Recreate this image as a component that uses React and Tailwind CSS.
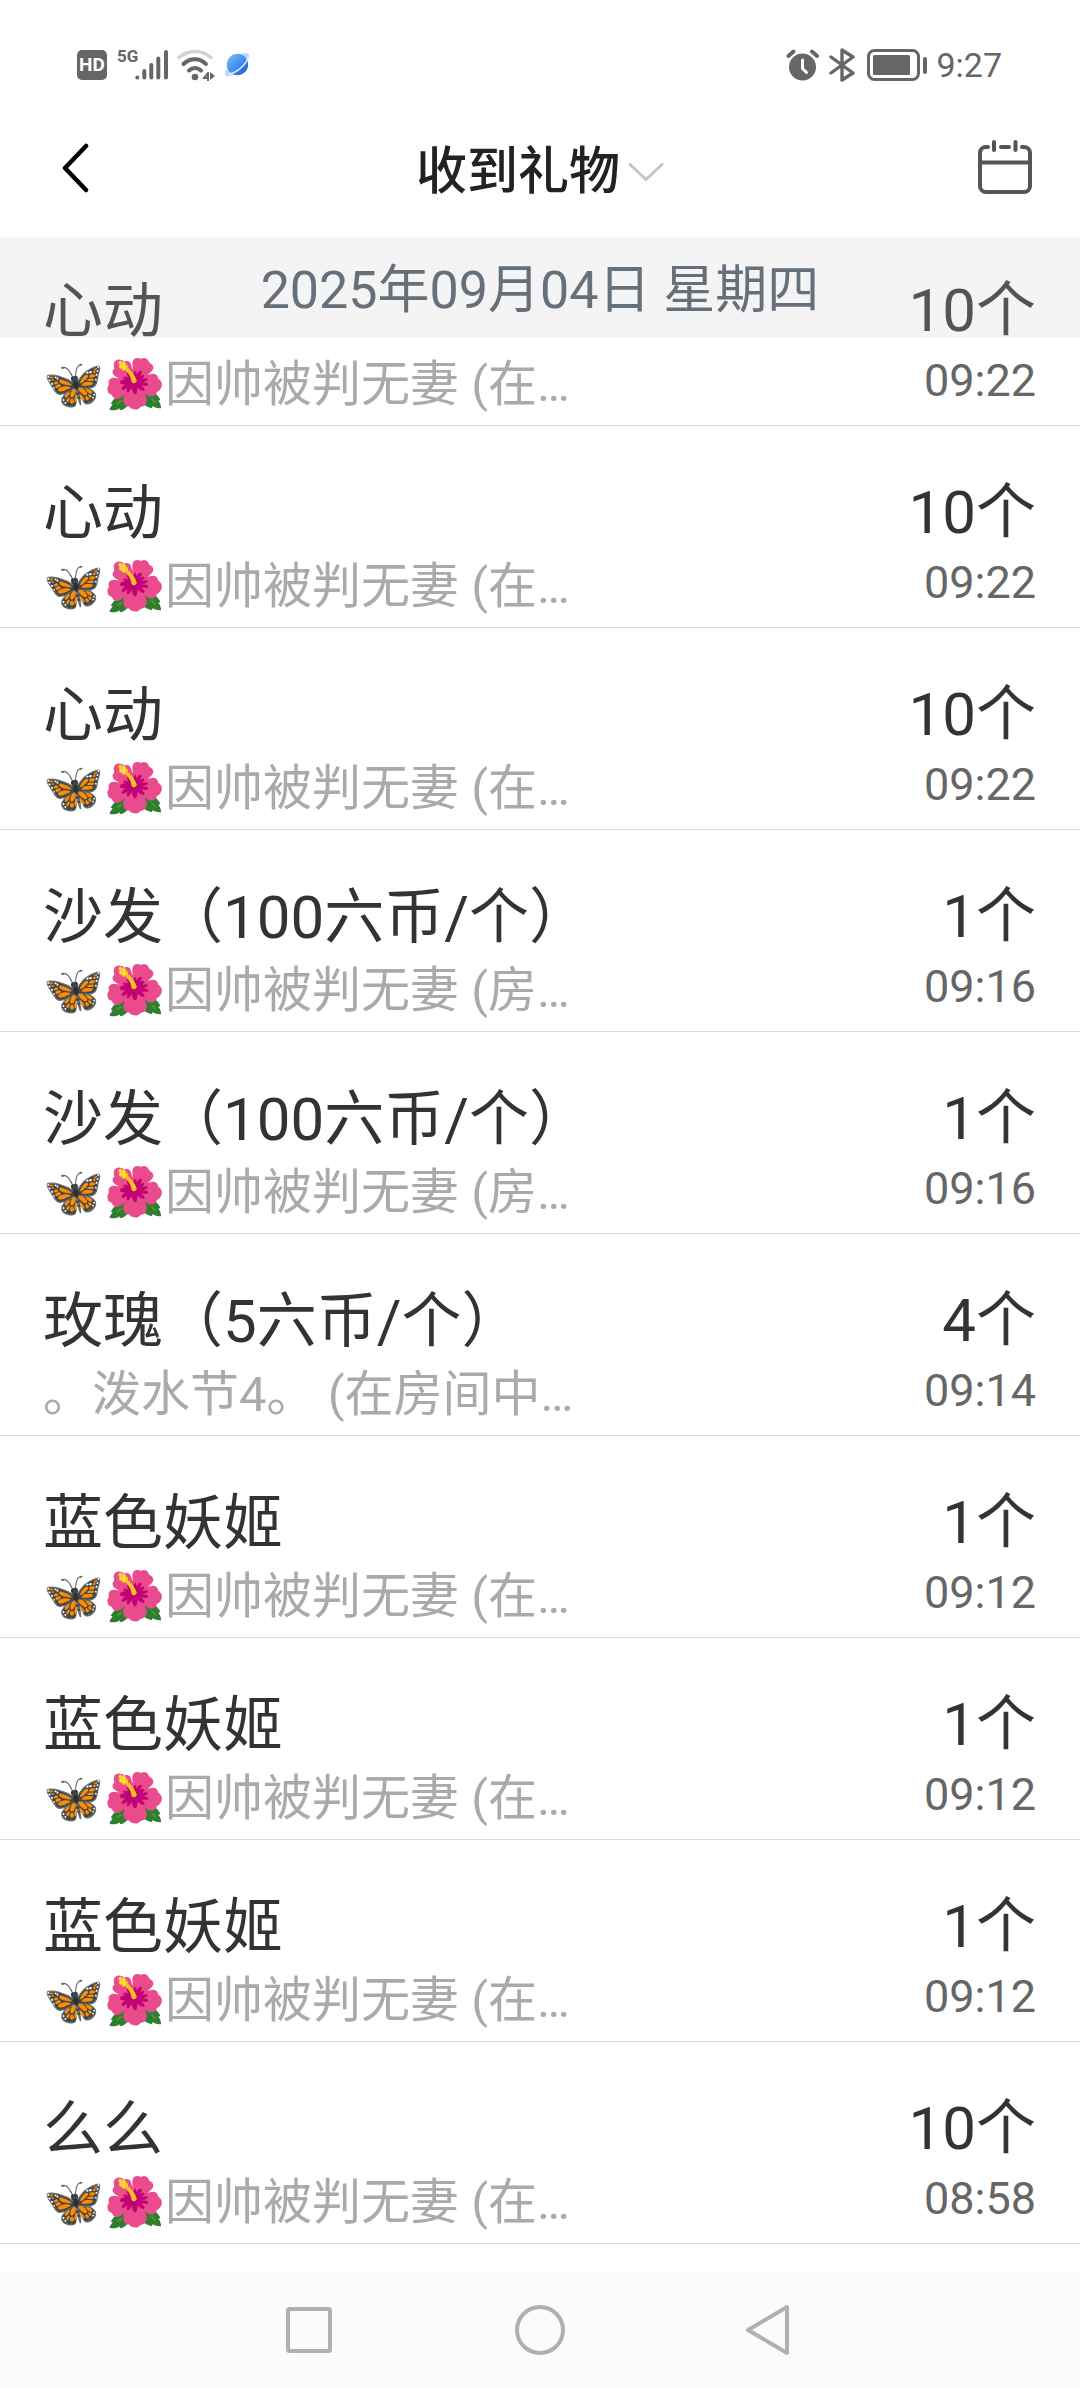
const GIFTS = [
  { name: '心动', from: '🦋🌺因帅被判无妻 (在…', count: '10个', time: '09:22' },
  { name: '心动', from: '🦋🌺因帅被判无妻 (在…', count: '10个', time: '09:22' },
  { name: '心动', from: '🦋🌺因帅被判无妻 (在…', count: '10个', time: '09:22' },
  { name: '沙发（100六币/个）', from: '🦋🌺因帅被判无妻 (房…', count: '1个', time: '09:16' },
  { name: '沙发（100六币/个）', from: '🦋🌺因帅被判无妻 (房…', count: '1个', time: '09:16' },
  { name: '玫瑰（5六币/个）', from: '。泼水节4。 (在房间中…', count: '4个', time: '09:14' },
  { name: '蓝色妖姬', from: '🦋🌺因帅被判无妻 (在…', count: '1个', time: '09:12' },
  { name: '蓝色妖姬', from: '🦋🌺因帅被判无妻 (在…', count: '1个', time: '09:12' },
  { name: '蓝色妖姬', from: '🦋🌺因帅被判无妻 (在…', count: '1个', time: '09:12' },
  { name: '么么', from: '🦋🌺因帅被判无妻 (在…', count: '10个', time: '08:58' },
]

function SignalIcon() {
  return (
    <svg width="34" height="32" viewBox="0 0 34 32" stroke="#666" strokeWidth="4" strokeLinecap="round">
      <path d="M2.3 28.5v.1M9.3 22v6.6M16.3 16v12.6M23.3 9.5v19.1M31 3v25.6" />
    </svg>
  )
}

function WifiIcon() {
  return (
    <svg width="38" height="32" viewBox="0 0 38 32" fill="none" strokeLinecap="round">
      <path d="M2 8.5C11 .5 25 .5 34 8.5" stroke="#d2d2d2" strokeWidth="3.4" />
      <path d="M6.5 15C13 8.5 23 8.5 29 15" stroke="#666" strokeWidth="4" />
      <path d="M12 21.5C15.5 18 20.5 18 24 21.5" stroke="#666" strokeWidth="4" />
      <circle cx="18" cy="28" r="3.3" fill="#666" />
      <path d="M31 24v8M31 24l-4 5h4" stroke="#666" strokeWidth="2" />
      <path d="M33 23v8l5-4z" fill="#666" />
    </svg>
  )
}

function PlanetIcon() {
  return (
    <svg width="26" height="28" viewBox="0 0 28 28">
      <defs>
        <linearGradient id="planet" x1="0" y1="0" x2="1" y2="1">
          <stop offset="0" stopColor="#7cc4f8" />
          <stop offset=".6" stopColor="#3a85ea" />
          <stop offset="1" stopColor="#1c50cc" />
        </linearGradient>
      </defs>
      <path d="M19 2c5-2 8-1 8 2 0 7-13 21-22 22-4 1-5-2-3-6z" fill="#bcd6fa" />
      <circle cx="14.5" cy="13.5" r="11.5" fill="url(#planet)" />
      <path d="M26 6c-2 7-11 16-21 18" fill="none" stroke="#d9e9ff" strokeWidth="1.6" />
    </svg>
  )
}

function AlarmIcon() {
  return (
    <svg width="34" height="32" viewBox="0 0 34 32" fill="none" strokeLinecap="round" strokeLinejoin="round">
      <circle cx="16.5" cy="18" r="13.5" fill="#666" />
      <path d="M2.5 7l5-4.5M31 7l-5-4.5" stroke="#666" strokeWidth="4" />
      <path d="M16.5 11v8.5l4 4" stroke="#fff" strokeWidth="3" />
    </svg>
  )
}

function BluetoothIcon() {
  return (
    <svg width="26" height="34" viewBox="0 0 26 34" fill="none" stroke="#666" strokeWidth="3.4" strokeLinecap="round" strokeLinejoin="round">
      <path d="M2 9l22 16-11 7V2l11 7L2 25" />
    </svg>
  )
}

function BatteryIcon() {
  return (
    <svg width="61" height="32" viewBox="0 0 61 32">
      <rect x="1.5" y="1.5" width="50" height="29" rx="6" fill="none" stroke="#666" strokeWidth="3" />
      <rect x="6" y="6" width="37" height="20" rx="1.5" fill="#666" />
      <rect x="56" y="8" width="4" height="17" rx="2" fill="#666" />
    </svg>
  )
}

function StatusBar() {
  return (
    <div className="flex h-[130px] items-center justify-between pr-[78px] pl-[77px] text-[#666]">
      <div className="flex items-center">
        <span className="flex size-[30px] items-center justify-center rounded-[5px] bg-[#666] text-[19px] font-bold text-white">HD</span>
        <span className="-mr-[3px] mb-[18px] ml-[10px] text-[17px] leading-[18px] font-bold">5G</span>
        <SignalIcon />
        <span className="ml-[8px]"><WifiIcon /></span>
        <span className="ml-[9px]"><PlanetIcon /></span>
      </div>
      <div className="flex items-center">
        <AlarmIcon />
        <span className="ml-[9px]"><BluetoothIcon /></span>
        <span className="ml-[12px]"><BatteryIcon /></span>
        <span className="ml-[8px] text-[34px] leading-[40px]">9:27</span>
      </div>
    </div>
  )
}

function Header() {
  return (
    <header className="grid h-[107px] grid-cols-[1fr_auto_1fr] items-center px-[47px] pb-[30px]">
      <button type="button" aria-label="返回" className="justify-self-start pl-[13px]">
        <svg width="30" height="52" viewBox="0 0 30 52" fill="none" stroke="#000" strokeWidth="4.5" strokeLinecap="round" strokeLinejoin="round">
          <path d="M26 3L5 25l21 22" />
        </svg>
      </button>
      <button type="button" className="flex items-center gap-[8px] pt-[6px]">
        <span className="text-[51px] leading-[60px] font-medium text-[#222]">收到礼物</span>
        <svg width="36" height="20" viewBox="0 0 36 20" fill="none" stroke="#c4c4c4" strokeWidth="3">
          <path d="M1 1.5l17 16 17-16" />
        </svg>
      </button>
      <button type="button" aria-label="日历" className="justify-self-end">
        <svg width="56" height="60" viewBox="0 0 56 60" fill="none" stroke="#555" strokeWidth="4" strokeLinecap="round">
          <path d="M11 8H9a6 6 0 0 0-6 6v33a6 6 0 0 0 6 6h38a6 6 0 0 0 6-6V14a6 6 0 0 0-6-6h-2M24 8h8M3 23.500h50M17 3v8M38.500 3v8" />
        </svg>
      </button>
    </header>
  )
}

function GiftRow({ gift }) {
  return (
    <li className="flex h-[202px] justify-between border-b border-[#dcdcdc] pt-[51px] pr-[44px] pl-[43px]">
      <div>
        <p className="text-[60px] leading-[74px] text-[#333]">{gift.name}</p>
        <p className="text-[49px] leading-[72px] text-[#aaa]">{gift.from}</p>
      </div>
      <div className="text-right">
        <p className="text-[60px] leading-[72px] text-[#333]">{gift.count}</p>
        <p className="text-[45px] leading-[68px] text-[#666]">{gift.time}</p>
      </div>
    </li>
  )
}

function NavBar() {
  return (
    <nav className="flex h-[116px] items-center justify-center gap-[180px] bg-[#fbfbfb]">
      <button type="button" aria-label="最近任务">
        <svg width="50" height="50" viewBox="0 0 50 50" fill="none" stroke="#b0b0b0" strokeWidth="4">
          <rect x="3" y="4" width="42" height="42" rx="1.5" />
        </svg>
      </button>
      <button type="button" aria-label="主屏幕">
        <svg width="50" height="50" viewBox="0 0 50 50" fill="none" stroke="#b0b0b0" strokeWidth="4">
          <circle cx="25" cy="25" r="23" />
        </svg>
      </button>
      <button type="button" aria-label="后退">
        <svg width="50" height="50" viewBox="0 0 50 50" fill="none" stroke="#b0b0b0" strokeWidth="4" strokeLinejoin="round">
          <path d="M42 2v46L3 25z" />
        </svg>
      </button>
    </nav>
  )
}

export default function App() {
  return (
    <div lang="zh-CN" className="flex min-h-screen flex-col bg-white font-[Roboto,'Noto_Sans_CJK_SC',sans-serif]">
      <StatusBar />
      <Header />
      <main className="flex-1">
        {/* the day heading floats over the scrolled list */}
        <h2 className="sticky top-0 z-10 h-[101px] bg-[#cdcdcd]/22 pt-[22px] text-center text-[52px] leading-[64px] text-[#66707a]">
          2025年09月04日 星期四
        </h2>
        <ul className="-mt-[114px]">
          {GIFTS.map((gift, i) => <GiftRow key={i} gift={gift} />)}
        </ul>
      </main>
      <NavBar />
    </div>
  )
}
